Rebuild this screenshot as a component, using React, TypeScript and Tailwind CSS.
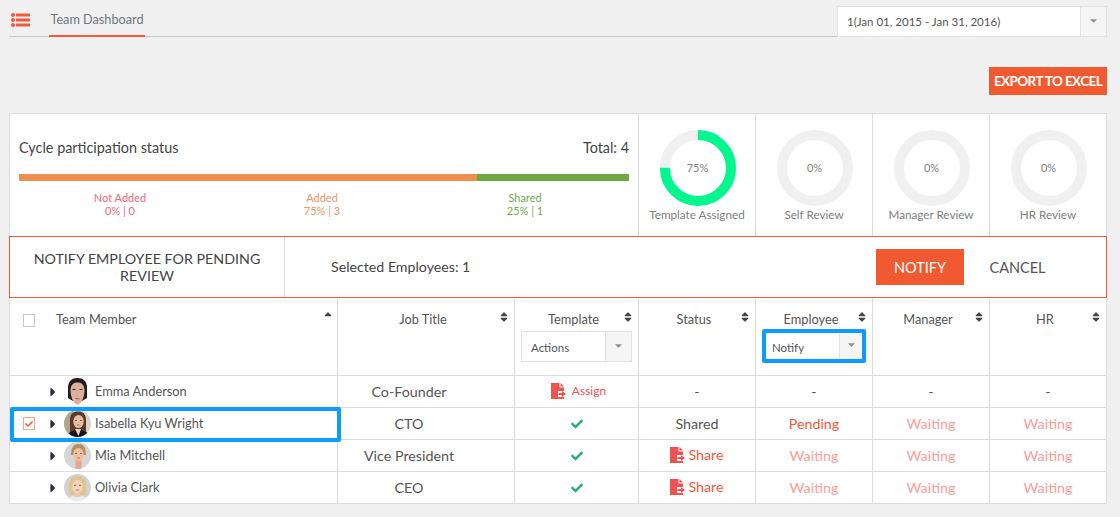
import type { ReactNode } from "react";
import { FaCaretDown, FaCaretRight, FaCheck, FaSort, FaSortUp } from "react-icons/fa";

const gauges = [
  { label: "Template Assigned", value: 75 },
  { label: "Self Review", value: 0 },
  { label: "Manager Review", value: 0 },
  { label: "HR Review", value: 0 },
];

const legend = [
  { label: "Not Added", value: "0% | 0", color: "text-[#f2677a]" },
  { label: "Added", value: "75% | 3", color: "text-[#f0946a]" },
  { label: "Shared", value: "25% | 1", color: "text-[#74a94c]" },
];

function Gauge({ label, value }: { label: string; value: number }) {
  const length = 2 * Math.PI * 33;
  return (
    <div className="w-[117px] border-l border-[#dcdcdc] flex flex-col items-center pt-[16px]">
      <div className="relative w-[76px] h-[76px] ml-[1px]">
        <svg viewBox="0 0 76 76" className="w-[76px] h-[76px] -rotate-90">
          <circle cx="38" cy="38" r="33" fill="none" stroke="#f0f0f0" strokeWidth="10" />
          {value > 0 && (
            <circle
              cx="38"
              cy="38"
              r="33"
              fill="none"
              stroke="#00f78e"
              strokeWidth="10"
              strokeDasharray={`${(length * value) / 100} ${length}`}
            />
          )}
        </svg>
        <div className="absolute inset-0 flex items-center justify-center text-[11px] text-[#808080]">{value}%</div>
      </div>
      <div className="text-[11.7px] leading-[15px] text-[#808080] mt-[1px]">{label}</div>
    </div>
  );
}

function SelectBox({ text, className }: { text: string; className: string }) {
  return (
    <div className={`flex bg-white border border-[#e2e2e2] ${className}`}>
      <div className="flex-1 flex items-center pl-[9px] text-[11.5px] text-[#555]">{text}</div>
      <div className="w-[26px] bg-[#f5f5f5] border-l border-[#e2e2e2] flex items-center justify-center pb-[3px]">
        <FaCaretDown className="text-[#909090] text-[11px]" />
      </div>
    </div>
  );
}

function Face({ cx, cy, skin }: { cx: number; cy: number; skin: string }) {
  return (
    <>
      <ellipse cx={cx} cy={cy} rx="5.2" ry="6.6" fill={skin} />
      <rect x={cx - 3.4} y={cy - 1.6} width="1.9" height="0.8" fill="#5a4034" />
      <rect x={cx + 1.5} y={cy - 1.6} width="1.9" height="0.8" fill="#5a4034" />
      <rect x={cx - 1.8} y={cy + 3} width="3.6" height="0.9" rx="0.4" fill="#c0706a" />
    </>
  );
}

function IsabellaAvatar() {
  return (
    <svg viewBox="0 0 27 27" className="w-[27px] h-[27px] shrink-0">
      <clipPath id="isabella">
        <circle cx="13.5" cy="13.5" r="13.5" />
      </clipPath>
      <g clipPath="url(#isabella)">
        <rect width="27" height="27" fill="#d8d4ce" />
        <rect width="9" height="27" fill="#b3a28c" />
        <path d="M6 25V10C6 4 9 1.5 14 1.5S22 4 22 10V23Z" fill="#5b3a26" />
        <path d="M3 27C4 22 9 20 14 20S25 22 26 27Z" fill="#15171f" />
        <path d="M11 19H17L14.5 26Z" fill="#eed0bc" />
        <Face cx={14.5} cy={11.5} skin="#e6bea6" />
      </g>
    </svg>
  );
}

function MiaAvatar() {
  return (
    <svg viewBox="0 0 27 27" className="w-[27px] h-[27px] shrink-0">
      <clipPath id="mia">
        <circle cx="13.5" cy="13.5" r="13.5" />
      </clipPath>
      <g clipPath="url(#mia)">
        <rect width="27" height="27" fill="#d6d6d6" />
        <path d="M7 13C7 5 10 2 14.5 2S22 5 22 13Z" fill="#b98f62" />
        <rect x="11.5" y="17" width="6" height="10" fill="#e3a98c" />
        <Face cx={14.5} cy={12.5} skin="#f0c2a4" />
      </g>
    </svg>
  );
}

function OliviaAvatar() {
  return (
    <svg viewBox="0 0 27 27" className="w-[27px] h-[27px] shrink-0">
      <clipPath id="olivia">
        <circle cx="13.5" cy="13.5" r="13.5" />
      </clipPath>
      <g clipPath="url(#olivia)">
        <rect width="27" height="27" fill="#cfd3d4" />
        <path d="M5 21V11C5 5 9 2 13.5 2S22 5 22 11V21Z" fill="#e0c592" />
        <path d="M3 27C5 23 9 21.5 13.5 21.5S23 23 25 27Z" fill="#e9eef2" />
        <rect x="10.5" y="17" width="6" height="6" fill="#eec6ac" />
        <Face cx={13.5} cy={12.5} skin="#f4d4ba" />
      </g>
    </svg>
  );
}

function EmmaAvatar() {
  return (
    <svg viewBox="0 0 21 27" className="w-[21px] h-[27px] shrink-0">
      <path d="M1 20V10C1 3 5 0 10.5 0S20 3 20 10V20L15 23H6Z" fill="#221b1c" />
      <path d="M3.5 12C4 6 7 4.5 10.5 4.5S17 6 17.5 12C17.5 20 14 26.5 10.5 26.5S3.5 20 3.5 12Z" fill="#dcae9d" />
      <rect x="5.5" y="11" width="3" height="1" fill="#3c2a28" />
      <rect x="12.5" y="11" width="3" height="1" fill="#3c2a28" />
      <rect x="8.5" y="20" width="4" height="1.2" rx="0.5" fill="#b5655f" />
    </svg>
  );
}

function FileIcon() {
  return (
    <svg viewBox="0 0 15 16" className="w-[15px] h-[16px] shrink-0">
      <path d="M0 0H8.500V4.500H13V16H0Z" fill="#ef5350" />
      <path d="M9.500 0L13 3.500H9.500Z" fill="#ef5350" />
      <rect x="7" y="8" width="8" height="6" fill="#fff" />
      <path d="M7.500 10H11V8L15 11L11 14V12H7.500Z" fill="#ef5350" />
    </svg>
  );
}

function ShareLink({ text, className }: { text: string; className: string }) {
  return (
    <span className={`flex items-center ${className}`}>
      <FileIcon />
      {text}
    </span>
  );
}

const dash = <span className="text-[#555]">-</span>;
const tick = <FaCheck className="text-[#27ae74] text-[12px]" />;
const waiting = <span className="text-[#fb9d98]">Waiting</span>;
const share = <ShareLink text="Share" className="gap-[3px] -mt-[2px] text-[#f4583b]" />;

const rows: {
  name: string;
  checked?: boolean;
  avatar: ReactNode;
  job: string;
  template: ReactNode;
  status: ReactNode;
  employee: ReactNode;
  manager: ReactNode;
  hr: ReactNode;
}[] = [
  {
    name: "Emma Anderson",
    avatar: <EmmaAvatar />,
    job: "Co-Founder",
    template: <ShareLink text="Assign" className="gap-[6px] -mt-[1px] pl-[4px] text-[12px] text-[#ef5350]" />,
    status: dash,
    employee: dash,
    manager: dash,
    hr: dash,
  },
  {
    name: "Isabella Kyu Wright",
    checked: true,
    avatar: <IsabellaAvatar />,
    job: "CTO",
    template: tick,
    status: <span className="text-[#555]">Shared</span>,
    employee: <span className="text-[#f4583b]">Pending</span>,
    manager: waiting,
    hr: waiting,
  },
  {
    name: "Mia Mitchell",
    avatar: <MiaAvatar />,
    job: "Vice President",
    template: tick,
    status: share,
    employee: waiting,
    manager: waiting,
    hr: waiting,
  },
  {
    name: "Olivia Clark",
    avatar: <OliviaAvatar />,
    job: "CEO",
    template: tick,
    status: share,
    employee: waiting,
    manager: waiting,
    hr: waiting,
  },
];

const colGrid = "grid grid-cols-[327px_177px_124px_117px_117px_117px_117px]";
const cell = "border-l border-[#dcdcdc] flex items-center justify-center";

function HeaderCell({ title, children }: { title: string; children?: ReactNode }) {
  return (
    <div className="relative border-l border-[#dcdcdc] flex flex-col items-center pt-[13px]">
      <div className="text-[12.8px] leading-[17px] text-[#555] pr-[6px]">{title}</div>
      <FaSort className="absolute top-[13px] right-[4px] text-[#444] text-[12px]" />
      {children}
    </div>
  );
}

export default function App() {
  return (
    <div className="w-[1120px] h-[517px] overflow-hidden bg-[#f0f0f0] font-['Lato','Open_Sans',sans-serif] pl-[9px] pr-[13px] pt-[6px]">
      {/* tabs */}
      <div className="flex items-end h-[31px]">
        <div className="flex-1 flex items-end h-[31px] border-b border-[#c8c8c8]">
          <div className="w-[40px] h-[30px] flex items-start pl-[2px] pt-[7px]">
            <svg viewBox="0 0 19 14" className="w-[19px] h-[14px]" fill="#f4583b">
              <circle cx="2" cy="2" r="2" />
              <circle cx="2" cy="7" r="2" />
              <circle cx="2" cy="12" r="2" />
              <rect x="5" y="0.5" width="14" height="3" />
              <rect x="5" y="5.5" width="14" height="3" />
              <rect x="5" y="10.5" width="14" height="3" />
            </svg>
          </div>
          <div className="w-[96px] h-[31px] border-b-2 border-[#f4583b] -mb-px text-center text-[12.7px] leading-[26px] text-[#6f7680]">
            Team Dashboard
          </div>
        </div>
        <SelectBox text="1(Jan 01, 2015 - Jan 31, 2016)" className="w-[270px] h-[31px]" />
      </div>

      <div className="flex justify-end mt-[30px]">
        <button className="w-[118px] h-[28px] bg-[#f15a30] text-white text-[13.5px] font-bold tracking-[-0.6px]">EXPORT TO EXCEL</button>
      </div>

      {/* participation */}
      <div className="mt-[18px] h-[123px] bg-white border border-[#dcdcdc] border-b-0 flex">
        <div className="w-[628px] px-[9px]">
          <div className="flex justify-between mt-[24px] text-[14.4px] leading-[20px] text-[#444]">
            <span>Cycle participation status</span>
            <span>Total: 4</span>
          </div>
          <div className="flex h-[7px] mt-[16px]">
            <div className="w-[75%] bg-[#ef8f4f]" />
            <div className="w-[25%] bg-[#6ea843]" />
          </div>
          <div className="grid grid-cols-[202px_202px_204px] mt-[10px] text-[11px] leading-[13px] text-center">
            {legend.map((item) => (
              <div key={item.label} className={item.color}>
                <div>{item.label}</div>
                <div>{item.value}</div>
              </div>
            ))}
          </div>
        </div>
        <div className="flex ml-auto">
          {gauges.map((g) => (
            <Gauge key={g.label} {...g} />
          ))}
        </div>
      </div>

      {/* notify bar */}
      <div className="h-[62px] bg-white border border-[#f4583b] flex items-center">
        <div className="w-[275px] h-full border-r border-[#dcdcdc] flex items-center justify-center text-center text-[14.25px] leading-[17px] text-[#444] px-[16px]">
          NOTIFY EMPLOYEE FOR PENDING REVIEW
        </div>
        <div className="ml-[46px] text-[14.2px] text-[#444]">Selected Employees: 1</div>
        <button className="ml-auto w-[88px] h-[36px] pt-[1px] bg-[#f15a30] text-white text-[14.5px]">NOTIFY</button>
        <button className="w-[107px] mr-[35px] pt-[1px] text-[14.5px] text-[#555]">CANCEL</button>
      </div>

      {/* table */}
      <div className="bg-white border-x border-b border-[#dcdcdc]">
        <div className={`${colGrid} h-[78px] border-b border-[#dcdcdc]`}>
          <div className="relative pl-[13px] pt-[16px] flex gap-[21px]">
            <div className="w-[12px] h-[13px] border border-[#c8c8c8]" />
            <span className="text-[12.8px] leading-[17px] -mt-[3px] text-[#555]">Team Member</span>
            <FaSortUp className="absolute top-[13px] right-[3px] text-[#444] text-[12px]" />
          </div>
          <HeaderCell title="Job Title" />
          <HeaderCell title="Template">
            <SelectBox text="Actions" className="w-[111px] h-[31px] mt-[3px] [&>div:first-child]:pt-[2px]" />
          </HeaderCell>
          <HeaderCell title="Status" />
          <HeaderCell title="Employee">
            <SelectBox
              text="Notify"
              className="w-[98px] h-[28px] mt-[4px] relative z-10 [&>div:first-child]:pl-[6px] [&>div:first-child]:pt-[3px] [&>div:last-child]:w-[23px] before:content-[''] before:absolute before:-inset-[4px] before:border-4 before:border-[#0a9dfb] before:rounded-[2px]"
            />
          </HeaderCell>
          <HeaderCell title="Manager" />
          <HeaderCell title="HR" />
        </div>
        {rows.map((r, i) => (
          <div
            key={r.name}
            className={`${colGrid} text-[14.3px] ${i < rows.length - 1 ? "h-[32px] border-b border-[#dcdcdc]" : "h-[31px]"}`}
          >
            <div className="relative flex items-center pl-[13px] text-[12.8px] text-[#555]">
              <div className={`w-[12px] h-[13px] flex items-center justify-center ${r.checked ? "border border-[#f7a58f]" : ""}`}>
                {r.checked && <FaCheck className="text-[#f4583b] text-[8px]" />}
              </div>
              <FaCaretRight className="ml-[11px] text-[#33283a] text-[14px]" />
              <div className="flex items-center justify-center w-[27px] ml-[4px]">{r.avatar}</div>
              <span className="ml-[4px]">{r.name}</span>
              {r.checked && <div className="absolute left-0 -top-[1px] w-[331px] h-[35px] border-4 border-[#0a9dfb] rounded-[2px]" />}
            </div>
            <div className={`${cell} text-[#555] pr-[34px]`}>{r.job}</div>
            <div className={cell}>{r.template}</div>
            <div className={cell}>{r.status}</div>
            <div className={cell}>{r.employee}</div>
            <div className={cell}>{r.manager}</div>
            <div className={cell}>{r.hr}</div>
          </div>
        ))}
      </div>
    </div>
  );
}
